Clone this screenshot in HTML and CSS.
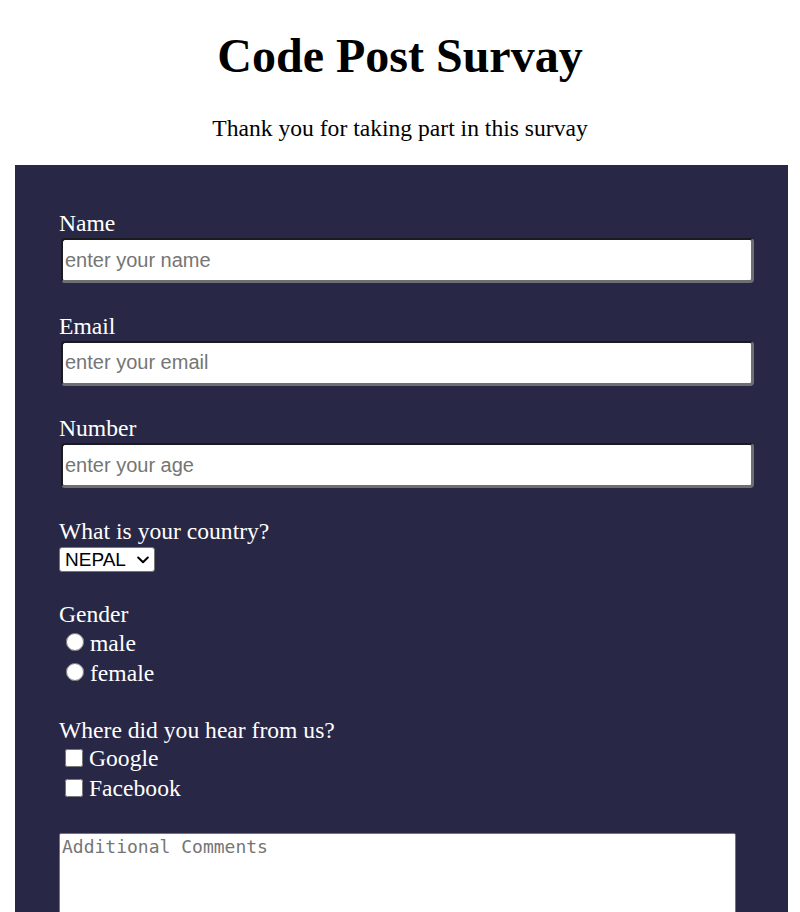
FILE: index.html
```html
<!DOCTYPE html>
<html lang="en">
<head>
<meta charset="utf-8">
<title>Code Post Survay</title>
<link rel="stylesheet" href="styles.css">
</head>
<body>
  <header class="header">
    <h1 class="title">Code Post Survay</h1>
    <p class="subtitle">Thank you for taking part in this survay</p>
  </header>
  <form class="survey">
    <div class="group">
      <label class="label" for="name">Name</label>
      <input class="field" id="name" type="text" placeholder="enter your name">
    </div>
    <div class="group">
      <label class="label" for="email">Email</label>
      <input class="field" id="email" type="email" placeholder="enter your email">
    </div>
    <div class="group">
      <label class="label" for="number">Number</label>
      <input class="field" id="number" type="number" placeholder="enter your age">
    </div>
    <div class="group">
      <label class="label" for="country">What is your country?</label>
      <span class="select-wrap">
        <select class="select" id="country">
          <option>NEPAL</option>
          <option>INDIA</option>
          <option>CHINA</option>
        </select>
        <svg class="chevron" width="12" height="8" viewBox="0 0 12 8" aria-hidden="true">
          <path d="M1.2 1.5 L6 6.2 L10.8 1.5" fill="none" stroke="#000" stroke-width="2" stroke-linecap="round" stroke-linejoin="round"/>
        </svg>
      </span>
    </div>
    <div class="group">
      <div class="label">Gender</div>
      <label class="option"><input class="radio" type="radio" name="gender"><span>male</span></label>
      <label class="option"><input class="radio" type="radio" name="gender"><span>female</span></label>
    </div>
    <div class="group">
      <div class="label">Where did you hear from us?</div>
      <label class="option"><input class="check" type="checkbox"><span>Google</span></label>
      <label class="option"><input class="check" type="checkbox"><span>Facebook</span></label>
    </div>
    <textarea class="comments" placeholder="Additional Comments"></textarea>
  </form>
</body>
</html>
```
FILE: styles.css
```css
html, body {
  margin: 0;
  padding: 0;
  background: #ffffff;
}

body {
  font-family: "Liberation Serif", "Times New Roman", serif;
  color: #000;
}

.header {
  text-align: center;
}

.title {
  font-size: 48px;
  font-weight: bold;
  margin: 28px 0 0;
  line-height: 55px;
}

.subtitle {
  font-size: 23.6px;
  line-height: 25px;
  margin: 33px 0 0;
}

.survey {
  margin: 24px 0 0 15px;
  width: 773px;
  box-sizing: border-box;
  padding: 46px 0 60px 44px;
  background: #282746;
  color: #ffffff;
  font-size: 23.6px;
  line-height: 25px;
}

.group {
  margin-bottom: 30.5px;
}

.label {
  display: block;
  height: 25px;
}

.field {
  display: block;
  box-sizing: border-box;
  width: 693px;
  height: 45px;
  margin: 2px 0 0 2px;
  padding: 0 2px;
  border-style: solid;
  border-width: 2px 3px 3px 2px;
  border-color: #1b1b1f #6f6f73 #6f6f73 #1b1b1f;
  border-radius: 4px;
  background: #ffffff;
  font-family: "Liberation Sans", Arial, sans-serif;
  font-size: 20px;
  color: #000;
  outline: none;
}

.field::placeholder {
  color: #757575;
}

.field::-webkit-outer-spin-button,
.field::-webkit-inner-spin-button {
  -webkit-appearance: none;
  margin: 0;
}

.select-wrap {
  position: relative;
  display: block;
  width: 96px;
  margin-top: 3px;
}

.select {
  display: block;
  box-sizing: border-box;
  height: 25px;
  width: 96px;
  margin: 0;
  -webkit-appearance: none;
  appearance: none;
  font-family: "Liberation Sans", Arial, sans-serif;
  font-size: 19px;
  line-height: 23px;
  color: #000;
  background: #fff;
  border: 1px solid #767676;
  border-radius: 3px;
  padding: 0 0 0 5px;
}

.chevron {
  position: absolute;
  left: 78px;
  top: 9px;
  pointer-events: none;
}

.option {
  display: flex;
  align-items: center;
  height: 30px;
}

.option span {
  position: relative;
  top: 1px;
}

.radio {
  width: 18px;
  height: 18px;
  margin: 0 6px 0 7px;
}

.check {
  width: 18px;
  height: 18px;
  margin: 0 6px 0 6px;
}

.comments {
  display: block;
  box-sizing: border-box;
  margin-top: 0;
  width: 677px;
  height: 160px;
  border: 1px solid #767676;
  border-radius: 2px;
  padding: 2px;
  font-family: "DejaVu Sans Mono", "Liberation Mono", monospace;
  font-size: 18px;
  line-height: 22px;
  resize: vertical;
}

.comments::placeholder {
  color: #757575;
}
```
